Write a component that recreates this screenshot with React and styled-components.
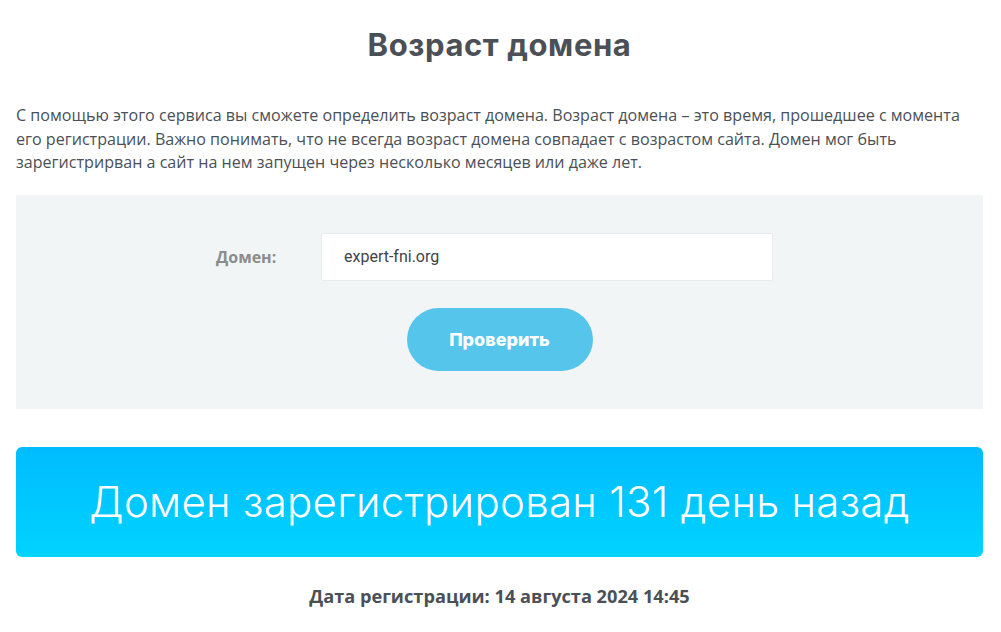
import React from "react";
import styled, { createGlobalStyle } from "styled-components";

const COLORS = {
  text: "#4b5057",
  label: "#8a8c8e",
  panel: "#f2f5f6",
  button: "#56c5ec",
};

const GlobalStyle = createGlobalStyle`
  body {
    margin: 0;
    background: #fff;
    font-family: "Open Sans", "Noto Sans", sans-serif;
    color: ${COLORS.text};
  }
`;

const Page = styled.main`
  padding: 0 18px 0 16px;
`;

const Title = styled.h1`
  margin: 27px 0 0;
  text-align: center;
  font-family: Inter, "Noto Sans", sans-serif;
  font-weight: 700;
  font-size: 31px;
  letter-spacing: 0.6px;
  line-height: 36px;
  color: ${COLORS.text};
`;

const Intro = styled.p`
  margin: 41px 0 0;
  font-size: 16.1px;
  line-height: 23.5px;
  color: ${COLORS.text};
`;

const Panel = styled.form`
  margin-top: 20px;
  background: ${COLORS.panel};
  padding: 38px 0 38px;
  display: flex;
  flex-direction: column;
  align-items: center;
  gap: 27px;
`;

const FieldRow = styled.div`
  align-self: stretch;
  display: flex;
  align-items: center;
  padding-left: 200px;
`;

const Label = styled.label`
  width: 105px;
  font-weight: 700;
  font-size: 16px;
  color: ${COLORS.label};
`;

const Input = styled.input`
  box-sizing: border-box;
  width: 452px;
  height: 48px;
  padding: 0 22px;
  border: 1px solid #e9ecee;
  border-radius: 2px;
  background: #fff;
  font-family: Roboto, sans-serif;
  font-size: 16px;
  color: #3f444a;
  outline: none;
`;

const Button = styled.button`
  width: 186px;
  height: 63px;
  border: none;
  border-radius: 32px;
  background: ${COLORS.button};
  color: #fff;
  font-family: Inter, "Noto Sans", sans-serif;
  font-weight: 800;
  font-size: 18px;
  cursor: pointer;
`;

const Result = styled.section`
  margin-top: 38px;
  height: 110px;
  border-radius: 6px;
  background: linear-gradient(180deg, #00bcff 0%, #00d3ff 100%);
  display: flex;
  align-items: center;
  justify-content: center;
  color: #fff;
  font-family: Inter, "Noto Sans", sans-serif;
  font-weight: 300;
  font-size: 42px;
  letter-spacing: 0.3px;
`;

const RegDate = styled.p`
  margin: 27px 0 0;
  text-align: center;
  font-family: "Open Sans", sans-serif;
  font-weight: 700;
  font-size: 18.2px;
  color: ${COLORS.text};
`;

export default function App() {
  return (
    <>
      <GlobalStyle />
      <Page>
        <Title>Возраст домена</Title>
        <Intro>
          С помощью этого сервиса вы сможете определить возраст домена. Возраст
          домена – это время, прошедшее с момента его регистрации. Важно
          понимать, что не всегда возраст домена совпадает с возрастом сайта.
          Домен мог быть зарегистрирван а сайт на нем запущен через несколько
          месяцев или даже лет.
        </Intro>
        <Panel onSubmit={(e) => e.preventDefault()}>
          <FieldRow>
            <Label htmlFor="domain">Домен:</Label>
            <Input id="domain" defaultValue="expert-fni.org" />
          </FieldRow>
          <Button type="submit">Проверить</Button>
        </Panel>
        <Result>Домен зарегистрирован 131 день назад</Result>
        <RegDate>Дата регистрации: 14 августа 2024 14:45</RegDate>
      </Page>
    </>
  );
}
